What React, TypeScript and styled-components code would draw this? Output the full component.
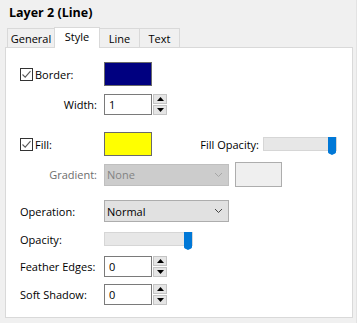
import React from 'react';
import styled, { createGlobalStyle } from 'styled-components';

const GlobalStyle = createGlobalStyle`
  html, body {
    margin: 0;
    padding: 0;
    background: #f0f0f0;
  }
  * {
    box-sizing: border-box;
  }
`;

// --- Small drawings ---
const Check = () => (
  <svg width="11" height="11" viewBox="0 0 11 11">
    <path d="M1.5 5.5 L4.2 8.2 L9.5 2.2" fill="none" stroke="#5a5a5a" strokeWidth="1.1" />
  </svg>
);

const Chevron: React.FC<{ color: string }> = ({ color }) => (
  <svg width="9" height="6" viewBox="0 0 9 6">
    <path d="M1 1 L4.5 4.5 L8 1" fill="none" stroke={color} strokeWidth="1" />
  </svg>
);

const Triangle: React.FC<{ up?: boolean }> = ({ up }) => (
  <svg width="7" height="4" viewBox="0 0 7 4">
    <path d={up ? 'M0 4 L3.5 0 L7 4 Z' : 'M0 0 L3.5 4 L7 0 Z'} fill="#000" />
  </svg>
);

const ThumbShape = () => (
  <svg width="8" height="18" viewBox="0 0 8 18">
    <path d="M0 0 H8 V15 Q8 16 7 16.5 L4 18 L1 16.5 Q0 16 0 15 Z" fill="#0078d7" />
  </svg>
);

// --- Components ---
const CheckBox: React.FC<{ label: string }> = ({ label }) => (
  <CheckWrap>
    <Box>
      <Check />
    </Box>
    <span>{label}</span>
  </CheckWrap>
);

const Spinner: React.FC<{ value: string }> = ({ value }) => (
  <SpinWrap>
    <SpinInput>{value}</SpinInput>
    <SpinButtons>
      <SpinButton>
        <Triangle up />
      </SpinButton>
      <SpinButton>
        <Triangle />
      </SpinButton>
    </SpinButtons>
  </SpinWrap>
);

const Slider: React.FC<{ width: number }> = ({ width }) => (
  <Track $width={width}>
    <Thumb>
      <ThumbShape />
    </Thumb>
  </Track>
);

const Dropdown: React.FC<{ value: string; disabled?: boolean }> = ({ value, disabled }) => (
  <Select $disabled={disabled}>
    <span>{value}</span>
    <Chevron color={disabled ? '#a6a6a6' : '#444'} />
  </Select>
);

const App = () => {
  const tabs = ['General', 'Style', 'Line', 'Text'];
  const tabWidths = [48, 46, 41, 41];

  return (
    <>
      <GlobalStyle />
      <Window>
        <Title>Layer 2 (Line)</Title>
        <TabRow>
          {tabs.map((t, i) => (
            <Tab key={t} $active={t === 'Style'} $width={tabWidths[i]}>
              {t}
            </Tab>
          ))}
        </TabRow>
        <Panel>
          <Row $h={24}>
            <LabelCell>
              <CheckBox label="Border:" />
            </LabelCell>
            <Swatch $color="#000080" />
          </Row>

          <Row $h={21} $mt={8}>
            <LabelCell $right>Width:</LabelCell>
            <Spinner value="1" />
          </Row>

          <Row $h={24} $mt={17}>
            <LabelCell>
              <CheckBox label="Fill:" />
            </LabelCell>
            <Swatch $color="#ffff00" />
            <SideGroup>
              <span>Fill Opacity:</span>
              <Slider width={74} />
            </SideGroup>
          </Row>

          <Row $h={25} $mt={6}>
            <LabelCell $right $muted>Gradient:</LabelCell>
            <Dropdown value="None" disabled />
            <GradientBox />
          </Row>

          <Row $h={22} $mt={13}>
            <LabelCell>Operation:</LabelCell>
            <Dropdown value="Normal" />
          </Row>

          <Row $h={14} $mt={10}>
            <LabelCell>Opacity:</LabelCell>
            <Slider width={89} />
          </Row>

          <Row $h={21} $mt={10}>
            <LabelCell>Feather Edges:</LabelCell>
            <Spinner value="0" />
          </Row>

          <Row $h={21} $mt={7}>
            <LabelCell>Soft Shadow:</LabelCell>
            <Spinner value="0" />
          </Row>
        </Panel>
      </Window>
    </>
  );
};

export default App;

// --- STYLES ---
const Window = styled.div`
  width: 357px;
  height: 323px;
  background: #f0f0f0;
  border-right: 1px solid #e3e3e3;
  padding: 0 3px 5px 5px;
  display: flex;
  flex-direction: column;
  font-family: 'Open Sans', 'Liberation Sans', sans-serif;
  font-size: 11px;
  color: #000;
`;

const Title = styled.div`
  height: 27px;
  padding: 4px 0 0 4px;
  font-weight: bold;
  font-size: 12.5px;
  line-height: 17px;
`;

const TabRow = styled.div`
  height: 20px;
  display: flex;
  align-items: flex-end;
  padding-left: 2px;
`;

const Tab = styled.div<{ $active?: boolean; $width: number }>`
  position: relative;
  width: ${(p) => p.$width}px;
  height: ${(p) => (p.$active ? 21 : 19)}px;
  margin-bottom: ${(p) => (p.$active ? -1 : 0)}px;
  z-index: ${(p) => (p.$active ? 1 : 0)};
  border: 1px solid #d9d9d9;
  border-bottom: none;
  background: ${(p) => (p.$active ? '#fff' : '#f0f0f0')};
  display: flex;
  justify-content: center;
  align-items: center;
  padding-bottom: ${(p) => (p.$active ? 3 : 0)}px;
  & + & {
    margin-left: -1px;
  }
`;

const Panel = styled.div`
  flex: 1;
  background: #fff;
  border: 1px solid #d9d9d9;
  padding: 14px 15px 0 14px;
  display: flex;
  flex-direction: column;
`;

const Row = styled.div<{ $h: number; $mt?: number }>`
  height: ${(p) => p.$h}px;
  margin-top: ${(p) => p.$mt ?? 0}px;
  display: flex;
  align-items: center;
`;

const LabelCell = styled.div<{ $right?: boolean; $muted?: boolean }>`
  width: 84px;
  flex-shrink: 0;
  text-align: ${(p) => (p.$right ? 'right' : 'left')};
  padding-right: ${(p) => (p.$right ? 7 : 0)}px;
  color: ${(p) => (p.$muted ? '#6d6d6d' : '#000')};
`;

const CheckWrap = styled.div`
  display: flex;
  align-items: center;
  gap: 2px;
`;

const Box = styled.div`
  width: 13px;
  height: 13px;
  border: 1px solid #333;
  background: #fff;
  display: flex;
  align-items: center;
  justify-content: center;
`;

const Swatch = styled.div<{ $color: string }>`
  width: 48px;
  height: 24px;
  border: 1px solid #6a6a6a;
  background: ${(p) => p.$color};
`;

const SpinWrap = styled.div`
  display: flex;
  gap: 1px;
  height: 21px;
`;

const SpinInput = styled.div`
  width: 48px;
  height: 21px;
  border: 1px solid #7a7a7a;
  background: #fff;
  padding-left: 4px;
  line-height: 19px;
`;

const SpinButtons = styled.div`
  display: flex;
  flex-direction: column;
  gap: 1px;
`;

const SpinButton = styled.div`
  width: 14px;
  height: 10px;
  background: #e5e5e5;
  border: 1px solid #c4c4c4;
  display: flex;
  align-items: center;
  justify-content: center;
`;

const SideGroup = styled.div`
  margin-left: auto;
  display: flex;
  align-items: center;
  gap: 4px;
`;

const Track = styled.div<{ $width: number }>`
  position: relative;
  width: ${(p) => p.$width}px;
  height: 14px;
  background: #e7e7e7;
  border: 1px solid #d6d6d6;
`;

const Thumb = styled.div`
  position: absolute;
  right: 0;
  top: -1px;
  line-height: 0;
`;

const Select = styled.div<{ $disabled?: boolean }>`
  width: 125px;
  height: 22px;
  background: ${(p) => (p.$disabled ? '#cccccc' : '#e1e1e1')};
  border: 1px solid ${(p) => (p.$disabled ? '#bfbfbf' : '#adadad')};
  color: ${(p) => (p.$disabled ? '#838383' : '#000')};
  display: flex;
  align-items: center;
  justify-content: space-between;
  padding: 0 5px 0 2px;
`;

const GradientBox = styled.div`
  width: 47px;
  height: 25px;
  margin-left: 6px;
  background: #efefef;
  border: 1px solid #adadad;
`;
